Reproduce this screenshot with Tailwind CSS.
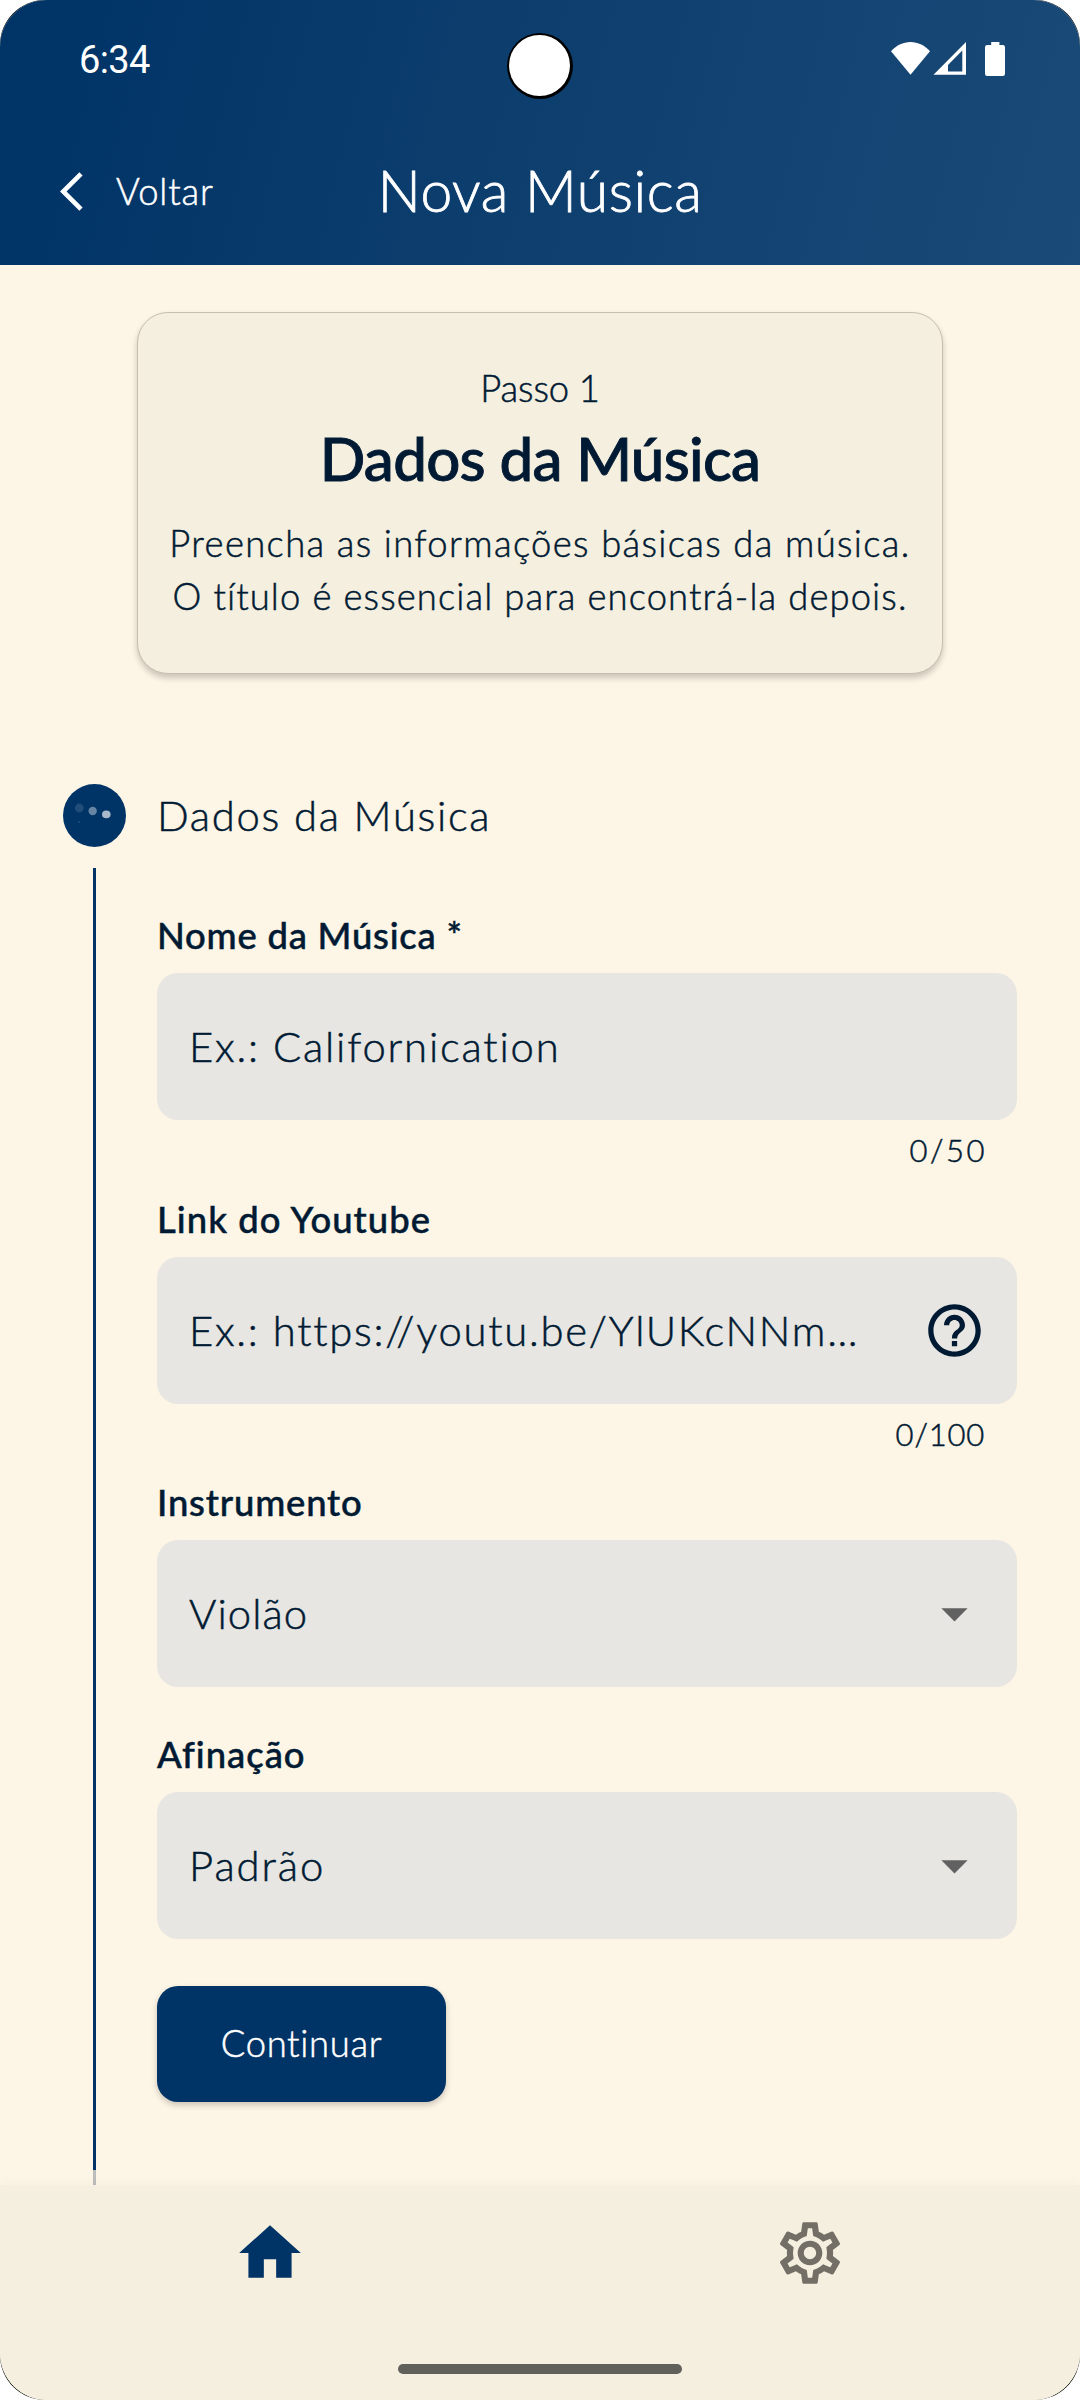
<!DOCTYPE html>
<html lang="pt-BR">
<head>
<meta charset="utf-8">
<title>Nova Música</title>
<script src="https://cdn.jsdelivr.net/npm/@tailwindcss/browser@4"></script>
</head>
<body class="bg-white">
<div class="w-[1080px] h-[2400px] bg-black rounded-[45px]">
<div class="relative w-full h-full flex flex-col overflow-hidden rounded-[47px] bg-[#fdf5e5] font-['Lato',sans-serif] font-light text-[36.4px] text-[#001a33] [-webkit-text-stroke-width:0.5px]">

  <header class="shrink-0 h-[265px] flex flex-col text-white bg-[linear-gradient(103.8deg,#003366,#1a4a77)]">
    <div class="h-[118px] flex items-center justify-between pl-[79px] pr-[75px] font-['Roboto',sans-serif] font-normal [-webkit-text-stroke-width:0px]">
      <span class="text-[38px] leading-none tracking-[-0.6px] pt-[1px]">6:34</span>
      <svg class="w-[114px] h-[34px]" viewBox="891 42 114 34" fill="#fff">
        <path d="M891 51.3C896 45.5 903 42 910.5 42S925 45.5 930 51.3L910.5 74.7Z"/>
        <path fill-rule="evenodd" d="M966 42V74.7H933.5ZM962.3 50.5L948 65V71.5H962.3Z"/>
        <path d="M991.2 42h8.2v3h3.4a2.2 2.2 0 0 1 2.2 2.2v26.6a2.2 2.2 0 0 1-2.2 2.2h-15.6a2.2 2.2 0 0 1-2.2-2.2V47.2a2.2 2.2 0 0 1 2.2-2.2h4z"/>
      </svg>
    </div>
    <div class="h-[147px] grid grid-cols-[1fr_auto_1fr] items-center">
      <div class="flex items-center pl-[60px] gap-[33px]">
        <svg class="w-[23px] h-[39px]" viewBox="0 0 23 39" fill="none" stroke="#fff" stroke-width="4.6"><path d="M21 1.8L3.2 19.5L21 37.2"/></svg>
        <span class="tracking-[0.85px]">Voltar</span>
      </div>
      <h1 class="text-[57px] leading-none tracking-[0.57px] pb-[2px] [-webkit-text-stroke-width:0.8px]">Nova Música</h1>
    </div>
  </header>
  <div class="absolute left-[507px] top-[33px] size-[66px] rounded-full bg-black pl-[2px] pt-[1.5px]"><div class="size-[61px] rounded-full bg-white"></div></div>

  <main class="flex-1 min-h-0 overflow-hidden">
    <section class="mt-[47px] mx-auto w-[806px] h-[362px] rounded-[31px] border border-[#c4bfae] bg-[#f5efdf] shadow-[0_4px_6px_rgba(0,0,0,0.2)] text-center pt-[53px]">
      <p class="leading-[44px] tracking-[-0.09px]">Passo 1</p>
      <h2 class="mt-[12px] text-[60px] leading-[72px] font-medium tracking-[-0.7px] [-webkit-text-stroke-width:0.9px]">Dados da Música</h2>
      <p class="mt-[23px] leading-[53px] whitespace-nowrap tracking-[1.36px]">Preencha as informações básicas da música.</p>
      <p class="leading-[53px] whitespace-nowrap tracking-[1.11px]">O título é essencial para encontrá-la depois.</p>
    </section>

    <div class="mt-[110px] pl-[63px] flex items-center gap-[31px] h-[63px]">
      <svg class="size-[63px]" viewBox="0 0 63 63">
        <circle cx="31.5" cy="31.5" r="31.5" fill="#003366"/>
        <circle cx="16.3" cy="24" r="4.4" fill="#204d7a"/>
        <circle cx="29.7" cy="27" r="4.2" fill="#6684a3"/>
        <ellipse cx="43.3" cy="30.4" rx="4.3" ry="3.8" fill="#a9b9ca"/>
        <circle cx="16" cy="38" r="1" fill="#204d7a"/>
      </svg>
      <h3 class="text-[41.8px] tracking-[1.68px] leading-none">Dados da Música</h3>
    </div>

    <div class="mt-[21px] flex">
      <div class="ml-[93px] w-[3px] shrink-0 flex flex-col">
        <div class="h-[1302px] bg-[#003366]"></div>
        <div class="h-[15px] bg-[#bdbdbd]"></div>
      </div>
      <form class="ml-[61px] w-[860px] pt-[45px]">
        <label class="block leading-[44px] mb-[16px] font-medium tracking-[0.78px]">Nome da Música *</label>
        <div class="h-[147px] rounded-[21px] bg-[#e7e6e2] flex items-center pl-[32px] pb-[1px] text-[41.8px] tracking-[1.8px]">Ex.: Californication</div>
        <p class="mt-[12px] pr-[30px] text-right text-[31px] leading-[36px] tracking-[2.5px]">0/50</p>

        <label class="block mt-[29px] leading-[44px] mb-[16px] font-medium tracking-[1.08px]">Link do Youtube</label>
        <div class="h-[147px] rounded-[21px] bg-[#e7e6e2] flex items-center justify-between pl-[32px] pr-[31px] pb-[1px] text-[41.8px] tracking-[1.74px]">
          <span class="whitespace-nowrap">Ex.: https://youtu.be/YlUKcNNm…</span>
          <svg class="size-[63px]" viewBox="0 0 24 24" fill="#001a33"><path d="M11 18h2v-2h-2v2zm1-16C6.48 2 2 6.48 2 12s4.48 10 10 10 10-4.48 10-10S17.52 2 12 2zm0 18c-4.41 0-8-3.59-8-8s3.59-8 8-8 8 3.59 8 8-3.59 8-8 8zm0-14c-2.21 0-4 1.79-4 4h2c0-1.1.9-2 2-2s2 .9 2 2c0 2-3 1.75-3 5h2c0-2.25 3-2.5 3-5 0-2.21-1.79-4-4-4z"/></svg>
        </div>
        <p class="mt-[12px] pr-[32px] text-right text-[31px] leading-[36px] tracking-[0.8px]">0/100</p>

        <label class="block mt-[28px] leading-[44px] mb-[16px] font-medium tracking-[0.84px]">Instrumento</label>
        <div class="h-[147px] rounded-[21px] bg-[#e7e6e2] flex items-center justify-between pl-[32px] pr-[31px] pb-[1px] text-[41.8px] tracking-[1.04px]">
          <span>Violão</span>
          <svg class="size-[63px]" viewBox="0 0 24 24" fill="#616161"><path d="M7 10l5 5 5-5z"/></svg>
        </div>

        <label class="block mt-[45px] leading-[44px] mb-[16px] font-medium tracking-[1px]">Afinação</label>
        <div class="h-[147px] rounded-[21px] bg-[#e7e6e2] flex items-center justify-between pl-[32px] pr-[31px] pb-[1px] text-[41.8px] tracking-[1.95px]">
          <span>Padrão</span>
          <svg class="size-[63px]" viewBox="0 0 24 24" fill="#616161"><path d="M7 10l5 5 5-5z"/></svg>
        </div>

        <button type="button" class="mt-[47px] w-[289px] h-[116px] flex items-center justify-center pb-[1px] rounded-[21px] bg-[#003366] text-white tracking-[0.69px] shadow-[0_3px_6px_rgba(0,0,0,0.2)]">Continuar</button>
      </form>
    </div>
  </main>

  <nav class="relative shrink-0 h-[215px] bg-[#f5efdf] shadow-[0_-2px_12px_rgba(0,0,0,0.03)] flex flex-col items-center">
    <div class="w-full grid grid-cols-2 justify-items-center pt-[31px]">
      <svg class="size-[74px]" viewBox="0 0 24 24" fill="#003366"><path d="M10 20v-6h4v6h5v-8h3L12 3 2 12h3v8z"/></svg>
      <svg class="size-[74px]" viewBox="0 0 24 24" fill="#736f67"><path d="M19.43 12.98c.04-.32.07-.64.07-.98 0-.34-.03-.66-.07-.98l2.11-1.65c.19-.15.24-.42.12-.64l-2-3.46c-.09-.16-.26-.25-.44-.25-.06 0-.12.01-.17.03l-2.49 1c-.52-.4-1.08-.73-1.69-.98l-.38-2.65C14.46 2.18 14.25 2 14 2h-4c-.25 0-.46.18-.49.42l-.38 2.65c-.61.25-1.17.59-1.69.98l-2.49-1c-.06-.02-.12-.03-.18-.03-.17 0-.34.09-.43.25l-2 3.46c-.13.22-.07.49.12.64l2.11 1.65c-.04.32-.07.65-.07.98 0 .33.03.66.07.98l-2.11 1.65c-.19.15-.24.42-.12.64l2 3.46c.09.16.26.25.44.25.06 0 .12-.01.17-.03l2.49-1c.52.4 1.08.73 1.69.98l.38 2.65c.03.24.24.42.49.42h4c.25 0 .46-.18.49-.42l.38-2.65c.61-.25 1.17-.59 1.69-.98l2.49 1c.06.02.12.03.18.03.17 0 .34-.09.43-.25l2-3.46c.12-.22.07-.49-.12-.64l-2.11-1.65zm-1.98-1.71c.04.31.05.52.05.73 0 .21-.02.43-.05.73l-.14 1.13.89.7 1.08.84-.7 1.21-1.27-.51-1.04-.42-.9.68c-.43.32-.84.56-1.25.73l-1.06.43-.16 1.13-.2 1.35h-1.4l-.19-1.35-.16-1.13-1.06-.43c-.43-.18-.83-.41-1.23-.71l-.91-.7-1.06.43-1.27.51-.7-1.21 1.08-.84.89-.7-.14-1.13c-.03-.31-.05-.54-.05-.74s.02-.43.05-.73l.14-1.13-.89-.7-1.08-.84.7-1.21 1.27.51 1.04.42.9-.68c.43-.32.84-.56 1.25-.73l1.06-.43.16-1.13.2-1.35h1.39l.19 1.35.16 1.13 1.06.43c.43.18.83.41 1.23.71l.91.7 1.06-.43 1.27-.51.7 1.21-1.07.85-.89.7.14 1.13zM12 8c-2.21 0-4 1.79-4 4s1.79 4 4 4 4-1.79 4-4-1.79-4-4-4zm0 6c-1.1 0-2-.9-2-2s.9-2 2-2 2 .9 2 2-.9 2-2 2z"/></svg>
    </div>
    <div class="mt-[74px] w-[284px] h-[10px] rounded-full bg-[#61605a]"></div>
  </nav>
</div>
</div>
</body>
</html>
